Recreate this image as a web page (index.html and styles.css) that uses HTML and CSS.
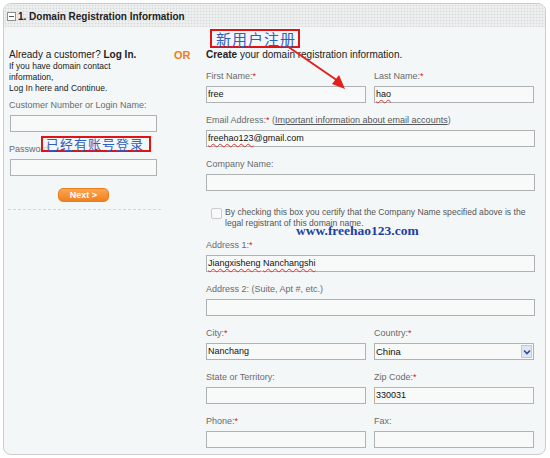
FILE: index.html
```html
<!DOCTYPE html>
<html>
<head>
<meta charset="utf-8">
<link rel="stylesheet" href="styles.css">
</head>
<body>
<div class="panel">
  <div class="hd"><span class="toggle"></span><span class="title">1. Domain Registration Information</span></div>
  <div class="bd">
    <div class="login">
      <div class="lead">Already a customer? <b>Log In.</b></div>
      <div class="small">If you have domain contact information,<br>Log In here and Continue.</div>
      <div class="lbl l1">Customer Number or Login Name:</div>
      <div class="inp lin"></div>
      <div class="lbl l2">Password:</div>
      <div class="inp lin"></div>
      <div class="next">Next &gt;</div>
      <div class="sep"></div>
    </div>
    <div class="or">OR</div>
    <div class="create">
      <div class="lead"><b>Create</b> your domain registration information.</div>
      <div class="row first">
        <div class="col"><div class="lbl">First Name:<i>*</i></div><div class="inp">free</div></div>
        <div class="col"><div class="lbl">Last Name:<i>*</i></div><div class="inp"><span class="sp">hao</span></div></div>
      </div>
      <div class="row">
        <div class="full"><div class="lbl">Email Address:<i>*</i> (<u>Important information about email accounts</u>)</div><div class="inp"><span class="sp">freehao123</span>@gmail.com</div></div>
      </div>
      <div class="row">
        <div class="full"><div class="lbl">Company Name:</div><div class="inp"></div></div>
      </div>
      <div class="check">
        <span class="box"></span>
        <span class="ctext">By checking this box you certify that the Company Name specified above is the legal registrant of this domain name.</span>
      </div>
      <div class="row">
        <div class="full"><div class="lbl">Address 1:<i>*</i></div><div class="inp"><span class="sp">Jiangxisheng</span> <span class="sp">Nanchangshi</span></div></div>
      </div>
      <div class="row">
        <div class="full"><div class="lbl">Address 2: (Suite, Apt #, etc.)</div><div class="inp"></div></div>
      </div>
      <div class="row">
        <div class="col"><div class="lbl">City:<i>*</i></div><div class="inp">Nanchang</div></div>
        <div class="col"><div class="lbl">Country:<i>*</i></div><div class="inp sel">China<span class="dd"><svg width="8" height="6" viewBox="0 0 8 6"><path d="M1 1.5 L4 4.5 L7 1.5" fill="none" stroke="#2b4aa0" stroke-width="1.6"/></svg></span></div></div>
      </div>
      <div class="row">
        <div class="col"><div class="lbl">State or Territory:</div><div class="inp"></div></div>
        <div class="col"><div class="lbl">Zip Code:<i>*</i></div><div class="inp zip">330031</div></div>
      </div>
      <div class="row">
        <div class="col"><div class="lbl">Phone:<i>*</i></div><div class="inp"></div></div>
        <div class="col"><div class="lbl">Fax:</div><div class="inp"></div></div>
      </div>
    </div>
  </div>
  <div class="note note1">新用户注册</div>
  <div class="note note2">已经有账号登录</div>
  <div class="wm">www.freehao123.com</div>
  <svg class="arrow" width="543" height="452" viewBox="0 0 543 452">
    <line x1="283" y1="42" x2="334" y2="77" stroke="#e4201c" stroke-width="2"/>
    <polygon points="341,85 328,80 335,71" fill="#e4201c"/>
  </svg>
</div>
</body>
</html>
```

FILE: styles.css
```css
body {
  margin: 0;
  background: #fff;
  font-family: "Liberation Sans", Arial, sans-serif;
  color: #222;
}
.panel {
  position: relative;
  margin: 3px 0 0 3px;
  width: 543px;
  height: 452px;
  box-sizing: border-box;
  border: 1px solid #c9cdcd;
  border-radius: 8px;
  background: #f3f7f8;
  overflow: hidden;
}
.hd {
  height: 23px;
  display: flex;
  align-items: center;
  padding: 1px 0 0 3px;
  box-sizing: border-box;
  background-color: #eef0f0;
  background-image: radial-gradient(circle, #d6dada 0.8px, transparent 1.1px);
  background-size: 3px 3px;
}
.toggle {
  position: relative;
  width: 7px;
  height: 7px;
  border: 1px solid #8a8e8e;
  background: #fff;
  margin-right: 2px;
}
.toggle::after {
  content: "";
  position: absolute;
  left: 1px;
  top: 3px;
  width: 5px;
  height: 1px;
  background: #555;
}
.title {
  font-size: 10px;
  font-weight: bold;
  color: #222;
}
.bd {
  display: flex;
  padding: 21px 0 0 5px;
}
.login {
  width: 152px;
}
.or {
  width: 45px;
  box-sizing: border-box;
  padding-left: 13px;
  font-size: 11px;
  font-weight: bold;
  color: #f07d1a;
  line-height: 14px;
}
.create {
  width: 329px;
}
.lead {
  font-size: 10px;
  line-height: 14px;
  color: #222;
}
.small {
  width: 118px;
  margin-top: -1px;
  font-size: 8.5px;
  line-height: 11px;
  color: #222;
}
.lbl {
  font-size: 9px;
  line-height: 13px;
  color: #6b6b6b;
  margin-bottom: 3px;
  white-space: nowrap;
}
.lbl i {
  font-style: normal;
  color: #d42020;
}
.lbl u {
  color: #555;
}
.l1 { margin-top: 5px; }
.l2 { margin-top: 11px; }
.inp {
  position: relative;
  height: 17px;
  box-sizing: border-box;
  border: 1px solid #aeb2b2;
  background: #f8fafa;
  font-size: 9px;
  line-height: 15px;
  padding-left: 1px;
  color: #111;
}
.lin {
  margin-left: 1px;
  width: 147px;
}
.sp {
  text-decoration: underline wavy #e03030;
  text-decoration-thickness: 1px;
  text-underline-offset: 2px;
}
.next {
  margin: 12px 0 0 49px;
  width: 51px;
  height: 14px;
  box-sizing: border-box;
  border: 1px solid #e8801e;
  border-radius: 5px;
  background: linear-gradient(#fca453, #f0821f);
  color: #fff;
  font-size: 9px;
  font-weight: bold;
  line-height: 12px;
  text-align: center;
}
.sep {
  margin: 7px 0 0 -1px;
  width: 153px;
  border-top: 1px dashed #d2d6d6;
}
.row {
  display: flex;
  gap: 8px;
  margin-bottom: 11px;
}
.row.first {
  margin-top: 8px;
}
.col {
  width: 160px;
}
.full {
  width: 329px;
}
.check {
  display: flex;
  margin: 16px 0 10px 5px;
}
.box {
  flex: none;
  width: 11px;
  height: 11px;
  box-sizing: border-box;
  margin-top: 1px;
  border: 1px solid #c8cccc;
  border-radius: 2px;
  background: #f8fafa;
}
.ctext {
  margin-left: 3px;
  width: 308px;
  font-size: 8.6px;
  line-height: 11px;
  color: #555;
}
.sel {
  font-size: 9.5px;
}
.dd {
  position: absolute;
  right: 1px;
  top: 1px;
  width: 11px;
  height: 13px;
  box-sizing: border-box;
  border: 1px solid #c2cad6;
  background: #dfe6ee;
  display: flex;
  align-items: center;
  justify-content: center;
}
.zip {
  border-color: #cfae98;
}
.note {
  position: absolute;
  box-sizing: border-box;
  border: 2px solid #e01414;
  color: #2f5fbf;
  font-family: "Noto Sans CJK SC", sans-serif;
  background: rgba(243, 247, 248, 0.6);
}
.note1 {
  left: 206px;
  top: 25px;
  width: 90px;
  height: 19px;
  font-size: 15px;
  line-height: 15px;
  padding-left: 4px;
  letter-spacing: 1px;
}
.note2 {
  left: 37px;
  top: 132px;
  width: 110px;
  height: 16px;
  font-size: 13px;
  line-height: 12px;
  padding-left: 3px;
  letter-spacing: 1px;
}
.wm {
  position: absolute;
  left: 292px;
  top: 220px;
  font-family: "Liberation Serif", "Times New Roman", serif;
  font-weight: bold;
  font-size: 13.5px;
  line-height: 13px;
  color: #1f3f9f;
}
.arrow {
  position: absolute;
  left: 0;
  top: 0;
  pointer-events: none;
}
```
